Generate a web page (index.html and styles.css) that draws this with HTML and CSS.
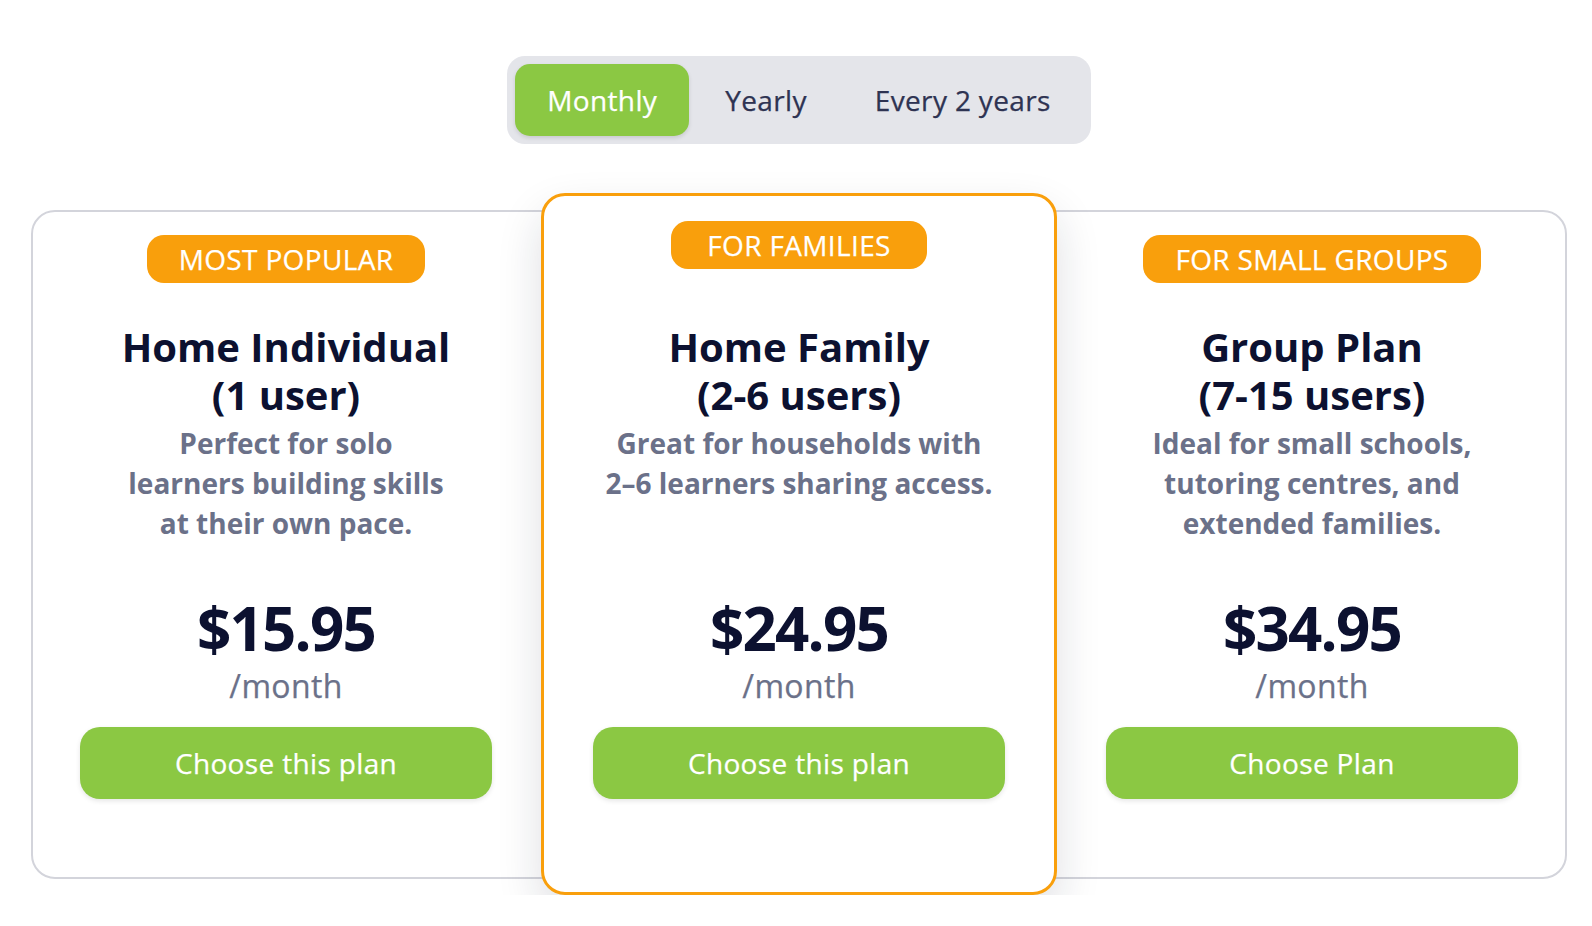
FILE: index.html
```html
<!DOCTYPE html>
<html lang="en">
<head>
<meta charset="utf-8">
<title>Plans</title>
<link rel="stylesheet" href="styles.css">
</head>
<body>
<div class="page">
  <div class="toggle-row">
    <div class="toggle">
      <button class="seg active">Monthly</button>
      <button class="seg">Yearly</button>
      <button class="seg">Every 2 years</button>
    </div>
  </div>
  <div class="plans">
    <div class="card card-left">
      <div class="badge">MOST POPULAR</div>
      <h2 class="title">Home Individual<br>(1 user)</h2>
      <p class="desc">Perfect for solo<br>learners building skills<br>at their own pace.</p>
      <div class="price">$15.95</div>
      <div class="period">/month</div>
      <button class="cta">Choose this plan</button>
    </div>
    <div class="card featured">
      <div class="badge badge-wide">FOR FAMILIES</div>
      <h2 class="title">Home Family<br>(2-6 users)</h2>
      <p class="desc">Great for households with<br>2–6 learners sharing access.</p>
      <div class="price">$24.95</div>
      <div class="period">/month</div>
      <button class="cta">Choose this plan</button>
    </div>
    <div class="card card-right">
      <div class="badge">FOR SMALL GROUPS</div>
      <h2 class="title">Group Plan<br>(7-15 users)</h2>
      <p class="desc">Ideal for small schools,<br>tutoring centres, and<br>extended families.</p>
      <div class="price">$34.95</div>
      <div class="period">/month</div>
      <button class="cta">Choose Plan</button>
    </div>
  </div>
</div>
</body>
</html>
```
FILE: styles.css
```css
* { box-sizing: border-box; }
html, body { margin: 0; padding: 0; background: #ffffff; }
body {
  font-family: "Open Sans", "Noto Sans", "Liberation Sans", sans-serif;
  color: #0c1130;
}
.page {
  padding: 56px 0 0 6px;
}
.toggle-row {
  display: flex;
  justify-content: center;
}
.toggle {
  display: flex;
  gap: 4px;
  padding: 8px;
  background: #e4e5ea;
  border-radius: 18px;
}
.seg, .badge, .period, .cta {
  font-weight: 500;
  letter-spacing: 0.35px;
  -webkit-text-stroke: 0.25px currentColor;
}
.seg {
  font-family: inherit;
  font-size: 28px;
  line-height: 38px;
  padding: 17px 32px;
  border: 0;
  background: transparent;
  color: #2e3352;
  border-radius: 15px;
  cursor: pointer;
}
.seg.active {
  background: #8bc843;
  color: #ffffff;
  box-shadow: 0 2px 4px rgba(0, 0, 0, 0.12);
}
.plans {
  display: flex;
  align-items: center;
  justify-content: center;
  margin-top: 49px;
}
.card {
  position: relative;
  width: 510px;
  flex-shrink: 0;
  display: flex;
  flex-direction: column;
  align-items: center;
  text-align: center;
  background: #ffffff;
  border: 2px solid #d3d4db;
  border-radius: 24px;
  padding: 23px 47px 78px;
}
.card-left {
  width: 540px;
  padding-right: 77px;
  margin-right: -30px;
}
.card-right {
  width: 540px;
  padding-left: 77px;
  margin-left: -30px;
}
.card.featured {
  width: 516px;
  z-index: 2;
  border: 3px solid #f99f0c;
  padding: 25px 49px 93px;
  box-shadow: 0 20px 45px rgba(20, 25, 50, 0.14);
}
.badge {
  height: 48px;
  padding: 5px 32px;
  font-size: 28px;
  line-height: 38px;
  color: #ffffff;
  background: #f99f0c;
  border-radius: 17px;
  white-space: nowrap;
}
.badge-wide {
  padding: 5px 36px;
}
.title {
  margin: 40px 0 0;
  font-size: 40px;
  line-height: 48px;
  font-weight: 700;
  color: #0c1130;
}
.featured .title {
  margin-top: 54px;
}
.desc {
  margin: 4px 0 0;
  min-height: 120px;
  font-size: 28px;
  line-height: 40px;
  font-weight: 700;
  color: #6b7189;
}
.price {
  margin-top: 49px;
  font-size: 60px;
  line-height: 72px;
  font-weight: 700;
  letter-spacing: -1.8px;
  color: #0c1130;
}
.period {
  margin-top: 2px;
  font-size: 32px;
  line-height: 40px;
  color: #6b7189;
}
.cta {
  margin-top: 21px;
  width: 100%;
  height: 72px;
  border: 0;
  border-radius: 20px;
  background: #8bc843;
  color: #ffffff;
  font-family: inherit;
  font-size: 28px;
  line-height: 38px;
  box-shadow: 0 2px 5px rgba(0, 0, 0, 0.1);
  cursor: pointer;
}
```
